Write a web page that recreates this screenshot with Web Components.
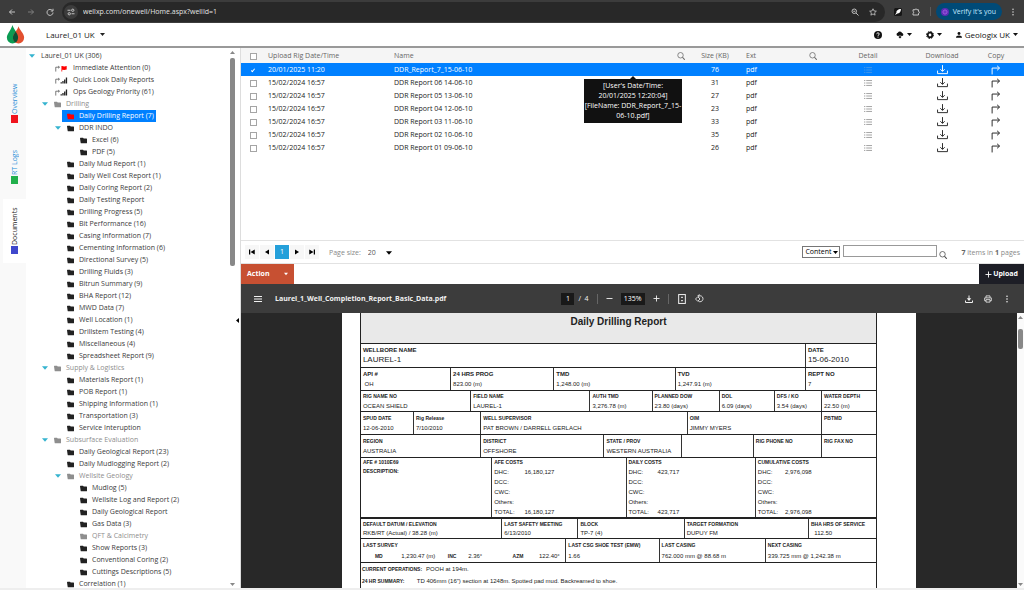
<!DOCTYPE html>
<html lang="en">
<head>
<meta charset="utf-8">
<title>Laurel_01 UK</title>
<style>
html, body {
  margin: 0;
  height: 100%;
}
body {
  overflow: hidden;
  font-family: "Open Sans", "Noto Sans", sans-serif;
  font-size: 7px;
  line-height: 12px;
  color: #222;
}
</style>
</head>
<body>
<well-app></well-app>

<script>
const icons = {
  back: ['0 0 16 16', '<path d="M14 8H3M8 3L3 8l5 5" fill="none" stroke="currentColor" stroke-width="1.8"/>'],
  forward: ['0 0 16 16', '<path d="M2 8h11M8 3l5 5-5 5" fill="none" stroke="currentColor" stroke-width="1.8"/>'],
  reload: ['0 0 16 16', '<path d="M13 5.5A6 6 0 1 0 14 9M14 1.5V6H9.5" fill="none" stroke="currentColor" stroke-width="1.8"/>'],
  tune: ['0 0 16 16', '<path d="M1 4.5h6M15 11.5H9" stroke="currentColor" stroke-width="1.8"/><circle cx="11.5" cy="4.5" r="2.3" fill="none" stroke="currentColor" stroke-width="1.8"/><circle cx="4.5" cy="11.5" r="2.3" fill="none" stroke="currentColor" stroke-width="1.8"/>'],
  zoomout: ['0 0 16 16', '<circle cx="6.5" cy="6.5" r="4.5" fill="none" stroke="currentColor" stroke-width="1.8"/><path d="M10 10l5 5M4.5 6.5h4" stroke="currentColor" stroke-width="1.8"/>'],
  star: ['0 0 16 16', '<path d="M8 1.5l2 4.4 4.7.5-3.5 3.2 1 4.7L8 11.9l-4.2 2.4 1-4.7L1.3 6.4 6 5.9z" fill="none" stroke="currentColor" stroke-width="1.5"/>'],
  feather: ['0 0 16 16', '<rect width="16" height="16" rx="3" fill="#161616"/><path d="M14 2C8 2 4 6 5 9l-3 5 5-3c3 0 7-3 7-9z" fill="#fff"/>'],
  puzzle: ['0 0 16 16', '<path d="M2 3.5h4.3a1.7 1.7 0 1 1 3.4 0H13V7a1.8 1.8 0 1 1 0 3.6V14H2v-3.5a1.8 1.8 0 0 0 0-3.5z" fill="none" stroke="currentColor" stroke-width="1.8"/>'],
  dots: ['0 0 16 16', '<circle cx="8" cy="2.5" r="1.6" fill="currentColor"/><circle cx="8" cy="8" r="1.6" fill="currentColor"/><circle cx="8" cy="13.5" r="1.6" fill="currentColor"/>'],
  avatar: ['0 0 16 16', '<circle cx="8" cy="8" r="8" fill="#5a2bb5"/><circle cx="8" cy="8" r="4" fill="none" stroke="#b06ae0" stroke-width="1.5"/><path d="M8 2v12M2 8h12" stroke="#8b48d8"/>'],
  drop: ['0 0 20 22', '<path d="M6.5 0C7.5 5 13 9 13 14.5a6.5 6.8 0 0 1-13 0C0 10 5 6 6.5 0z" fill="#0b9b53"/><path d="M13.5 1.5C14.5 6 20 9.5 20 14.5a6.5 6.8 0 0 1-13 0C7 10 12 7 13.5 1.5z" fill="#e2502f"/><path d="M10.2 7.5C11.8 9.7 13 12 13 14.5c0 2.5-1.2 4.8-3 5.9-1.8-1.1-3-3.4-3-5.9 0-2.5 1.7-4.7 3.2-7z" fill="#0a5136"/>'],
  caret: ['0 0 10 6', '<path d="M0 0h10L5 6z" fill="currentColor"/>'],
  caretup: ['0 0 10 6', '<path d="M0 6h10L5 0z" fill="currentColor"/>'],
  handle: ['0 0 6 10', '<path d="M6 0v10L0 5z" fill="currentColor"/>'],
  help: ['0 0 16 16', '<circle cx="8" cy="8" r="8" fill="currentColor"/><path d="M5.5 6.3C5.5 3 10.5 3 10.5 6c0 1.8-2.5 1.9-2.5 3.7" fill="none" stroke="#fff" stroke-width="1.9"/><circle cx="8" cy="12" r="1.2" fill="#fff"/>'],
  cloud: ['0 0 18 16', '<path d="M4.5 10.5a3.7 3.7 0 0 1-.3-7.3 5 5 0 0 1 9.4.5 3.5 3.5 0 0 1 .4 6.8h-2.5V8h-5v2.5z" fill="currentColor"/><path d="M7.5 8h3v4H13l-4 4-4-4h2.5z" fill="currentColor"/>'],
  gear: ['0 0 16 16', '<circle cx="8" cy="8" r="4.6" fill="none" stroke="currentColor" stroke-width="3.6"/><circle cx="8" cy="8" r="7" fill="none" stroke="currentColor" stroke-width="2" stroke-dasharray="3 2.5"/>'],
  user: ['0 0 16 16', '<circle cx="8" cy="4" r="3.8" fill="currentColor"/><path d="M0 15c0-4 3-6 8-6s8 2 8 6z" fill="currentColor"/>'],
  folder: ['0 0 14 12', '<path d="M0 1.5Q0 .5 1 .5h5L7.5 2H13q1 0 1 1v7.5q0 1-1 1H2.5q-1 0-1.2-1z" fill="currentColor"/>'],
  flag: ['0 0 28 16', '<path d="M2 15V5h8M7.5 2.5L10.5 5l-3 2.5" fill="none" stroke="#444" stroke-width="1.6"/><path d="M15 15V2h1.5l5 1.5L27 2v8.500l-5.500 1-4.700-.8V15z" fill="#f00"/>'],
  signal: ['0 0 28 16', '<path d="M2 15V5h8M7.5 2.5L10.5 5l-3 2.5" fill="none" stroke="#444" stroke-width="1.6"/><path d="M13 15v-3h3v3zm4 0V9h3v6zm4 0V5.5h3V15zm4 0V1h3v14z" fill="#222"/>'],
  search: ['0 0 16 16', '<circle cx="7" cy="6.5" r="5.5" fill="none" stroke="currentColor" stroke-width="1.5"/><path d="M11 10.5l4.5 5" stroke="currentColor" stroke-width="2.2"/>'],
  list: ['0 0 18 16', '<path d="M5 2.5h13M5 8h13M5 13.5h13M0 2.5h3M0 8h3M0 13.5h3" stroke="currentColor" stroke-width="1.5"/>'],
  download: ['0 0 20 18', '<path d="M1 11v5.5h18V11M10 1v11M6 8.5l4 4 4-4" fill="none" stroke="currentColor" stroke-width="1.7"/>'],
  copy: ['0 0 18 18', '<path d="M2 17V5.5h13M11 1.5l4.5 4-4.5 4" fill="none" stroke="currentColor" stroke-width="1.7"/>'],
  first: ['0 0 12 10', '<path d="M0 0h2.5v10H0zM11.5 0v10L3 5z" fill="currentColor"/>'],
  prev: ['0 0 12 10', '<path d="M10 0v10L2 5z" fill="currentColor"/>'],
  next: ['0 0 12 10', '<path d="M2 0v10l8-5z" fill="currentColor"/>'],
  last: ['0 0 12 10', '<path d="M9.5 0H12v10H9.5zM.5 0v10L9 5z" fill="currentColor"/>'],
  menu: ['0 0 16 12', '<path d="M0 1h16M0 6h16M0 11h16" stroke="currentColor" stroke-width="2"/>'],
  minus: ['0 0 14 14', '<path d="M1 7h12" stroke="currentColor" stroke-width="1.8"/>'],
  plus: ['0 0 14 14', '<path d="M1 7h12M7 1v12" stroke="currentColor" stroke-width="1.8"/>'],
  fit: ['0 0 16 18', '<rect x="2" y="1" width="12" height="16" fill="none" stroke="currentColor" stroke-width="1.8"/><path d="M6 7l2-3 2 3zM6 11l2 3 2-3z" fill="currentColor"/>'],
  rotate: ['0 0 18 18', '<path d="M6 3.5h4a6 6 0 1 1-3 11.2M9 .5l-3 3 3 3" fill="none" stroke="currentColor" stroke-width="1.7"/><path d="M5.5 5.5L10 10l-4.5 4.5L1 10z" fill="none" stroke="currentColor" stroke-width="1.7"/>'],
  save: ['0 0 16 16', '<path d="M1 11v4h14v-4M8 1v8" fill="none" stroke="currentColor" stroke-width="2"/><path d="M3.5 6.5h9L8 12z" fill="currentColor"/>'],
  print: ['0 0 18 16', '<path d="M4.5 5V1h9v4M4.5 12H1.5V5.5h15V12h-3" fill="none" stroke="currentColor" stroke-width="1.8"/><path d="M4.5 9.5h9V15h-9z" fill="none" stroke="currentColor" stroke-width="1.8"/>']
}

// attach a shadow root holding the given markup
const render = (el, html) => {
  el.attachShadow({mode: 'open'}).innerHTML = html
}

const buttonReset = /* CSS */`
button, a {
  font: inherit;
  color: inherit;
  text-decoration: none;
}
button {
  margin: 0;
  padding: 0;
  border: 0;
  background: none;
  display: inline-flex;
  align-items: center;
  justify-content: center;
}
`

class UiIcon extends HTMLElement {
  connectedCallback() {
    if(this.shadowRoot) return
    const [box, shape] = icons[this.getAttribute('name')]
    render(this, /* HTML */`
<style>
:host {
  display: inline-block;
  flex: none;
  width: var(--size, 8px);
  height: var(--size, 8px);
}
svg {
  display: block;
  width: 100%;
  height: 100%;
}
</style>
<svg viewBox="${box}" aria-hidden="true">${shape}</svg>
`)
  }
}
window.customElements.define('ui-icon', UiIcon)

class BrowserBar extends HTMLElement {
  constructor() {
    super()
    render(this, /* HTML */`
<style>
${buttonReset}
:host {
  display: flex;
  align-items: center;
  height: 23px;
  background: #3c3c3c;
  color: #d0d0d0;
}
nav {
  display: flex;
  gap: 11px;
  padding: 0 8px;
}
nav button:nth-child(2) {
  color: #858585;
}
.address {
  flex: 1;
  display: flex;
  align-items: center;
  gap: 5px;
  height: 20px;
  box-sizing: border-box;
  padding: 0 8px 0 2px;
  border-radius: 10px;
  background: #282828;
}
.site {
  width: 14px;
  height: 14px;
  border-radius: 7px;
  background: #3c3c3c;
}
input {
  flex: 1;
  min-width: 0;
  border: 0;
  padding: 0;
  background: none;
  color: #e3e3e3;
  font: inherit;
  outline: 0;
}
.tools {
  display: flex;
  align-items: center;
  gap: 10px;
  padding: 0 7px 0 9px;
}
.line {
  width: 1px;
  height: 9px;
  background: #5a5a5a;
}
.verify {
  gap: 4px;
  height: 17px;
  margin: 0 -3px 0 -5px;
  padding: 0 6px 0 5px;
  border-radius: 9px;
  background: #004a77;
  color: #c2e7ff;
}
</style>
<nav>
  <button aria-label="Back"><ui-icon name="back"></ui-icon></button>
  <button aria-label="Forward"><ui-icon name="forward"></ui-icon></button>
  <button aria-label="Reload"><ui-icon name="reload"></ui-icon></button>
</nav>
<div class="address">
  <button class="site" aria-label="Site information"><ui-icon name="tune"></ui-icon></button>
  <input aria-label="Address" value="wellxp.com/onewell/Home.aspx?wellId=1">
  <button aria-label="Zoom"><ui-icon name="zoomout"></ui-icon></button>
  <span></span>
  <button aria-label="Bookmark"><ui-icon name="star"></ui-icon></button>
</div>
<div class="tools">
  <button aria-label="Feather"><ui-icon name="feather"></ui-icon></button>
  <button aria-label="Extensions"><ui-icon name="puzzle"></ui-icon></button>
  <span class="line"></span>
  <button class="verify"><ui-icon name="avatar"></ui-icon>Verify it's you</button>
  <button aria-label="Menu"><ui-icon name="dots"></ui-icon></button>
</div>
`)
  }
}
window.customElements.define('browser-bar', BrowserBar)

class AppHeader extends HTMLElement {
  constructor() {
    super()
    render(this, /* HTML */`
<style>
${buttonReset}
:host {
  display: flex;
  align-items: center;
  height: 23px;
  padding: 0 6px;
  border-bottom: 2px solid #999;
  background: #fff;
  font-size: 8px;
}
.logo {
  --size: 19px;
  margin-right: 21px;
}
.well {
  flex: 1;
}
nav {
  display: flex;
  gap: 14px;
}
button {
  gap: 5px;
}
nav button {
  gap: 3px;
  color: #111;
}
.caret {
  --size: 5px;
}
</style>
<ui-icon class="logo" name="drop"></ui-icon>
<div class="well"><button>Laurel_01 UK <ui-icon class="caret" name="caret"></ui-icon></button></div>
<nav>
  <button aria-label="Help"><ui-icon name="help"></ui-icon></button>
  <button aria-label="Downloads"><ui-icon name="cloud"></ui-icon> <ui-icon class="caret" name="caret"></ui-icon></button>
  <button aria-label="Settings"><ui-icon name="gear"></ui-icon> <ui-icon class="caret" name="caret"></ui-icon></button>
  <button><ui-icon name="user" style="--size: 6px"></ui-icon> Geologix UK <ui-icon class="caret" name="caret"></ui-icon></button>
</nav>
`)
  }
}
window.customElements.define('app-header', AppHeader)

class SideTab extends HTMLElement {
  constructor() {
    super()
    render(this, /* HTML */`
<style>
${buttonReset}
:host {
  display: flex;
  margin-left: 3px;
  color: #2a8fd8;
}
:host([selected]) {
  background: #fff;
  color: #222;
}
button {
  flex: 1;
  height: 64px;
  writing-mode: vertical-rl;
  transform: rotate(180deg);
  gap: 1px;
}
i {
  width: 7px;
  height: 8px;
  background: var(--mark);
}
</style>
<button role="tab"><i></i><slot></slot></button>
`)
  }
}
window.customElements.define('side-tab', SideTab)

class SideTabs extends HTMLElement {
  constructor() {
    super()
    render(this, /* HTML */`
<style>
:host {
  display: flex;
  flex-direction: column;
  width: 26px;
  flex: none;
  box-sizing: border-box;
  padding-top: 23px;
  background: #f9f9f9;
}
</style>
<side-tab style="--mark: #f0141e">Overview</side-tab>
<side-tab style="--mark: #22b04c">RT Logs</side-tab>
<side-tab style="--mark: #3f48cc" selected>Documents</side-tab>
`)
  }
}
window.customElements.define('side-tabs', SideTabs)

class ScrollRail extends HTMLElement {
  constructor() {
    super()
    render(this, /* HTML */`
<style>
:host {
  display: flex;
  flex-direction: column;
  align-items: center;
  flex: none;
  width: 7px;
  box-sizing: border-box;
  padding: 2px 0 1px;
  color: #888;
}
ui-icon {
  --size: 5px;
}
div {
  flex: 1;
  width: 5px;
  padding: 3px 0;
}
i {
  display: block;
  height: var(--thumb);
  margin-top: var(--start, 0px);
  border-radius: 2px;
  background: #888;
}
</style>
<ui-icon name="caretup"></ui-icon>
<div><i></i></div>
<ui-icon name="caret"></ui-icon>
`)
  }
}
window.customElements.define('scroll-rail', ScrollRail)

class TreeItem extends HTMLElement {
  connectedCallback() {
    if(this.shadowRoot) return
    const icon = this.getAttribute('icon')
    render(this, /* HTML */`
<style>
${buttonReset}
:host {
  display: block;
  color: #3a3a3a;
}
.row {
  display: flex;
  height: 12px;
}
.row button, .row span {
  width: 8px;
  --size: 6px;
  color: #35b3cf;
}
a {
  display: flex;
  align-items: center;
  gap: 5px;
  padding: 0 5px;
  white-space: nowrap;
}
:host([selected]) > .row a {
  padding-right: 2px;
}
a ui-icon {
  --size: 7px;
  color: #222;
}
a ui-icon.wide {
  width: 14px;
}
.group {
  margin-left: 13px;
}
:host([muted]) > .row a, :host([muted]) > .row a ui-icon {
  color: #8e8e8e;
}
:host([selected]) > .row a {
  background: #0080ff;
  color: #fff;
}
:host([selected]) > .row a ui-icon {
  color: #f00;
}
</style>
<div class="row">
  ${this.hasAttribute('open') ? '<button aria-label="Collapse"><ui-icon name="caret"></ui-icon></button>' : '<span></span>'}
  <a href="#">${icon === 'none' ? '' : `<ui-icon name="${icon || 'folder'}" class="${icon ? 'wide' : ''}"></ui-icon>`}${this.getAttribute('label').replace('&', '&amp;')}</a>
</div>
<div class="group"><slot></slot></div>
`)
  }
}
window.customElements.define('tree-item', TreeItem)

class DocumentTree extends HTMLElement {
  constructor() {
    super()
    render(this, /* HTML */`
<style>
:host {
  position: relative;
  display: flex;
  flex: none;
  width: 215px;
  box-sizing: border-box;
  border-right: 1px solid #ddd;
  background: #fff;
}
.items {
  flex: 1;
  padding: 2px 0 0 2px;
  overflow: hidden;
}
scroll-rail {
  --thumb: 40%;
  margin-right: 4px;
}
.handle {
  position: absolute;
  right: 0;
  top: 50%;
  --size: 5px;
  color: #000;
}
</style>
<div class="items">
  <tree-item label="Laurel_01 UK (306)" icon="none" open>
    <tree-item label="Immediate Attention (0)" icon="flag"></tree-item>
    <tree-item label="Quick Look Daily Reports" icon="signal"></tree-item>
    <tree-item label="Ops Geology Priority (61)" icon="signal"></tree-item>
    <tree-item label="Drilling" open muted>
      <tree-item label="Daily Drilling Report (7)" selected></tree-item>
      <tree-item label="DDR INDO" open>
        <tree-item label="Excel (6)"></tree-item>
        <tree-item label="PDF (5)"></tree-item>
      </tree-item>
      <tree-item label="Daily Mud Report (1)"></tree-item>
      <tree-item label="Daily Well Cost Report (1)"></tree-item>
      <tree-item label="Daily Coring Report (2)"></tree-item>
      <tree-item label="Daily Testing Report"></tree-item>
      <tree-item label="Drilling Progress (5)"></tree-item>
      <tree-item label="Bit Performance (16)"></tree-item>
      <tree-item label="Casing Information (7)"></tree-item>
      <tree-item label="Cementing Information (6)"></tree-item>
      <tree-item label="Directional Survey (5)"></tree-item>
      <tree-item label="Drilling Fluids (3)"></tree-item>
      <tree-item label="Bitrun Summary (9)"></tree-item>
      <tree-item label="BHA Report (12)"></tree-item>
      <tree-item label="MWD Data (7)"></tree-item>
      <tree-item label="Well Location (1)"></tree-item>
      <tree-item label="Drillstem Testing (4)"></tree-item>
      <tree-item label="Miscellaneous (4)"></tree-item>
      <tree-item label="Spreadsheet Report (9)"></tree-item>
    </tree-item>
    <tree-item label="Supply & Logistics" open muted>
      <tree-item label="Materials Report (1)"></tree-item>
      <tree-item label="POB Report (1)"></tree-item>
      <tree-item label="Shipping Information (1)"></tree-item>
      <tree-item label="Transportation (3)"></tree-item>
      <tree-item label="Service Interuption"></tree-item>
    </tree-item>
    <tree-item label="Subsurface Evaluation" open muted>
      <tree-item label="Daily Geological Report (23)"></tree-item>
      <tree-item label="Daily Mudlogging Report (2)"></tree-item>
      <tree-item label="Wellsite Geology" open muted>
        <tree-item label="Mudlog (5)"></tree-item>
        <tree-item label="Wellsite Log and Report (2)"></tree-item>
        <tree-item label="Daily Geological Report"></tree-item>
        <tree-item label="Gas Data (3)"></tree-item>
        <tree-item label="QFT & Calcimetry" muted></tree-item>
        <tree-item label="Show Reports (3)"></tree-item>
        <tree-item label="Conventional Coring (2)"></tree-item>
        <tree-item label="Cuttings Descriptions (5)"></tree-item>
      </tree-item>
      <tree-item label="Correlation (1)"></tree-item>
    </tree-item>
  </tree-item>
</div>
<scroll-rail></scroll-rail>
<ui-icon class="handle" name="handle"></ui-icon>
`)
  }
}
window.customElements.define('document-tree', DocumentTree)

const files = [
  ['20/01/2025 11:20', 'DDR_Report_7_15-06-10', 76],
  ['15/02/2024 16:57', 'DDR Report 06 14-06-10', 31],
  ['15/02/2024 16:57', 'DDR Report 05 13-06-10', 27],
  ['15/02/2024 16:57', 'DDR Report 04 12-06-10', 23],
  ['15/02/2024 16:57', 'DDR Report 03 11-06-10', 33],
  ['15/02/2024 16:57', 'DDR Report 02 10-06-10', 35],
  ['15/02/2024 16:57', 'DDR Report 01 09-06-10', 26]
]

class ToolTip extends HTMLElement {
  constructor() {
    super()
    render(this, /* HTML */`
<style>
:host {
  position: absolute;
  z-index: 1;
  top: calc(100% + 3px);
  right: 8px;
  width: 98px;
  box-sizing: border-box;
  padding: 2px 0;
  background: #111;
  color: #fff;
  line-height: 10px;
  text-align: center;
  white-space: nowrap;
}
:host::before {
  content: "";
  position: absolute;
  left: calc(50% - 3px);
  top: -3px;
  border: 3px solid transparent;
  border-top: 0;
  border-bottom-color: #111;
}
</style>
<slot></slot>
`)
  }
}
window.customElements.define('tool-tip', ToolTip)

class FileGrid extends HTMLElement {
  constructor() {
    super()
    const rows = files.map(([date, name, size], i) => /* HTML */`
  <tr class="${i ? '' : 'selected'}">
    <td class="mid"><input type="checkbox" aria-label="Select ${name}" ${i ? '' : 'checked'}></td>
    <td>${date}</td>
    <td class="name">${name}${i ? '' : `<tool-tip>[User's Date/Time:<br>20/01/2025 12:20:04]<br>[FileName: DDR_Report_7_15-<br>06-10.pdf]</tool-tip>`}</td>
    <td class="mid">${size}</td>
    <td class="ext">pdf</td>
    <td class="mid detail"><button aria-label="Detail"><ui-icon name="list"></ui-icon></button></td>
    <td class="mid"><button aria-label="Download"><ui-icon name="download" style="--size: 11px"></ui-icon></button></td>
    <td class="mid"><button aria-label="Copy"><ui-icon name="copy" style="--size: 10px"></ui-icon></button></td>
  </tr>`).join('')
    render(this, /* HTML */`
<style>
${buttonReset}
:host {
  display: block;
  flex: none;
  height: 192px;
  background: #fff;
}
table {
  width: 100%;
  table-layout: fixed;
  border-collapse: collapse;
}
th, td {
  height: 13px;
  padding: 0 3px;
  font-weight: normal;
  text-align: left;
  line-height: 11px;
}
th {
  height: 15px;
  background: #f5f5f5;
  color: #666;
}
th > div {
  display: flex;
  align-items: center;
  justify-content: space-between;
  padding-right: 2px;
}
th.ext, td.ext {
  padding-left: 6px;
}
th.mid, td.mid {
  padding: 0;
  text-align: center;
}
td button, input {
  vertical-align: middle;
}
.name {
  position: relative;
}
.detail {
  color: #777;
}
.selected {
  background: #0080ff;
  color: #fff;
}
.selected .detail {
  color: #5b9fe0;
}
input {
  appearance: none;
  width: 7px;
  height: 7px;
  margin: 0;
  border: 1px solid #a5a5a5;
  background: #fff;
}
input:checked {
  position: relative;
  border-color: transparent;
  background: none;
}
input:checked::after {
  content: "";
  position: absolute;
  left: 1px;
  top: 0;
  width: 1px;
  height: 3px;
  border: solid #fff;
  border-width: 0 1px 1px 0;
  transform: rotate(40deg);
}
</style>
<table>
  <colgroup>
    <col style="width: 24px"><col style="width: 126px"><col><col style="width: 50px">
    <col style="width: 80px"><col style="width: 96px"><col style="width: 52px"><col style="width: 56px">
  </colgroup>
  <tr>
    <th class="mid"><input type="checkbox" aria-label="Select all"></th>
    <th>Upload Rig Date/Time</th>
    <th><div>Name <ui-icon name="search"></ui-icon></div></th>
    <th class="mid">Size (KB)</th>
    <th class="ext"><div style="padding: 0">Ext <ui-icon name="search"></ui-icon></div></th>
    <th class="mid">Detail</th>
    <th class="mid">Download</th>
    <th class="mid">Copy</th>
  </tr>${rows}
</table>
`)
  }
}
window.customElements.define('file-grid', FileGrid)

class GridPager extends HTMLElement {
  constructor() {
    super()
    render(this, /* HTML */`
<style>
${buttonReset}
:host {
  display: flex;
  align-items: center;
  flex: none;
  height: 22px;
  padding: 0 4px;
  border: solid #e2e2e2;
  border-width: 1px 0;
  background: #fff;
  color: #888;
}
.pages {
  display: flex;
  gap: 1px;
}
.pages button {
  width: 14px;
  height: 14px;
  background: #f7f7f7;
  color: #000;
  --size: 6px;
}
.pages .current {
  background: #25a0da;
  color: #fff;
}
label {
  display: flex;
  align-items: center;
  margin: 2px auto 0 10px;
  gap: 4px;
}
.size {
  appearance: none;
  width: 17px;
  padding: 0 0 0 3px;
  border: 0;
  background: none;
  color: #555;
  font: inherit;
}
label ui-icon {
  --size: 6px;
  color: #000;
}
.picker {
  position: relative;
  display: flex;
  align-items: center;
}
.picker select {
  appearance: none;
  width: 38px;
  height: 12px;
  box-sizing: border-box;
  padding: 0 0 0 2px;
  border: 1px solid #767676;
  border-radius: 0;
  background: #fff;
  color: #000;
  font: inherit;
  line-height: 10px;
}
.picker ui-icon {
  position: absolute;
  right: 2px;
  --size: 5px;
  color: #000;
}
.query {
  width: 94px;
  height: 12px;
  box-sizing: border-box;
  margin: 0 2px 2px 3px;
  border: 1px solid #999;
  font: inherit;
}
.find {
  margin: 6px 14px 0 0;
  color: #444;
}
.total {
  padding-top: 2px;
}
b {
  color: #666;
}
</style>
<div class="pages">
  <button aria-label="First page"><ui-icon name="first"></ui-icon></button>
  <button aria-label="Previous page"><ui-icon name="prev"></ui-icon></button>
  <button class="current">1</button>
  <button aria-label="Next page"><ui-icon name="next"></ui-icon></button>
  <button aria-label="Last page"><ui-icon name="last"></ui-icon></button>
</div>
<label>Page size: <select class="size"><option>20</option></select><ui-icon name="caret"></ui-icon></label>
<div class="picker">
  <select aria-label="Search in"><option>Content</option></select>
  <ui-icon name="caret"></ui-icon>
</div>
<input class="query" aria-label="Search">
<button class="find" aria-label="Find"><ui-icon name="search"></ui-icon></button>
<span class="total"><b>7</b> items in <b>1</b> pages</span>
`)
  }
}
window.customElements.define('grid-pager', GridPager)

class ActionBar extends HTMLElement {
  constructor() {
    super()
    render(this, /* HTML */`
<style>
${buttonReset}
:host {
  display: flex;
  justify-content: space-between;
  flex: none;
  height: 20px;
  background: #fff;
  color: #fff;
  font-weight: bold;
}
.action {
  gap: 14px;
  padding: 0 6px;
  background: #c75032;
}
.action ui-icon {
  --size: 4px;
}
.upload {
  gap: 1px;
  padding: 0 6px;
  background: #1d1e26;
}
</style>
<button class="action">Action <ui-icon name="caret"></ui-icon></button>
<button class="upload"><ui-icon name="plus" style="--size: 7px"></ui-icon>Upload</button>
`)
  }
}
window.customElements.define('action-bar', ActionBar)

class ReportRow extends HTMLElement {
  constructor() {
    super()
    render(this, /* HTML */`
<style>
:host {
  display: grid;
  grid-template-columns: var(--cols, 1fr);
  box-sizing: border-box;
  border-top: 1px solid #222;
}
:host([strong]) {
  border-top-width: 2px;
}
</style>
<slot></slot>
`)
  }
}
window.customElements.define('report-row', ReportRow)

class ReportCell extends HTMLElement {
  connectedCallback() {
    if(this.shadowRoot) return
    render(this, /* HTML */`
<style>
:host {
  display: flex;
  flex-direction: column;
  justify-content: space-evenly;
  min-width: 0;
  padding-left: 2px;
  border-left: 1px solid #333;
  white-space: nowrap;
}
:host(:first-child) {
  border-left: 0;
}
:host([top]) {
  justify-content: flex-start;
  gap: 1px;
}
b {
  min-height: 8px;
  font-size: var(--label, 5px);
}
</style>
<b>${this.getAttribute('label') || ''}</b>
<span><slot></slot></span>
`)
  }
}
window.customElements.define('report-cell', ReportCell)

class CostList extends HTMLElement {
  connectedCallback() {
    if(this.shadowRoot) return
    const cost = this.getAttribute('cost')
    render(this, /* HTML */`
<style>
:host {
  display: grid;
  grid-template-columns: 23% 1fr;
  line-height: 10px;
}
</style>
<span>DHC:</span><span>${cost}</span>
<span>DCC:</span><span></span>
<span>CWC:</span><span></span>
<span>Others:</span><span></span>
<span>TOTAL:</span><span>${cost}</span>
`)
  }
}
window.customElements.define('cost-list', CostList)

class DrillingReport extends HTMLElement {
  constructor() {
    super()
    render(this, /* HTML */`
<style>
:host {
  display: flex;
  flex-direction: column;
  width: 74%;
  box-sizing: border-box;
  padding: 0 39px 0 18px;
  background: #fff;
  color: #222;
  font: 6px/8px "Liberation Sans", Arial, sans-serif;
}
.form {
  flex: 1;
  border: solid #222;
  border-width: 0 1px;
}
h1 {
  height: 30px;
  box-sizing: border-box;
  margin: 0;
  padding-top: 2px;
  background: #e9e9e9;
  font-size: 10px;
  line-height: 14px;
  text-align: center;
}
.h20 { height: 21px; }
.h22 { height: 23px; }
.h24 { height: 24px; }
.h60 { height: 60px; }
.mid { --label: 6px; }
.big { font-size: 8px; line-height: 10px; }
.survey {
  display: grid;
  grid-template-columns: 19% 17% 16% 16% 19% 1fr;
}
.survey b, p b {
  font-size: 5px;
}
.survey b {
  padding-left: 12px;
}
p {
  margin: 2px 0 4px 1px;
}
p b {
  margin-right: 4px;
}
</style>
<div class="form">
  <h1>Daily Drilling Report</h1>
  <report-row class="h24 mid" style="--cols: 443fr 71fr">
    <report-cell label="WELLBORE NAME"><span class="big">LAUREL-1</span></report-cell>
    <report-cell label="DATE"><span class="big">15-06-2010</span></report-cell>
  </report-row>
  <report-row class="h22 mid" style="--cols: 89fr 103fr 121fr 130fr 71fr">
    <report-cell label="API #">&nbsp;OH</report-cell>
    <report-cell label="24 HRS PROG">823.00 (m)</report-cell>
    <report-cell label="TMD">1,248.00 (m)</report-cell>
    <report-cell label="TVD">1,247.91 (m)</report-cell>
    <report-cell label="REPT NO">7</report-cell>
  </report-row>
  <report-row class="h20" style="--cols: 109fr 119fr 62fr 67fr 55fr 47fr 55fr">
    <report-cell label="RIG NAME NO">OCEAN SHIELD</report-cell>
    <report-cell label="FIELD NAME">LAUREL-1</report-cell>
    <report-cell label="AUTH TMD">3,276.78 (m)</report-cell>
    <report-cell label="PLANNED DOW">23.80 (days)</report-cell>
    <report-cell label="DOL">6.09 (days)</report-cell>
    <report-cell label="DFS / KO">3.54 (days)</report-cell>
    <report-cell label="WATER DEPTH">22.50 (m)</report-cell>
  </report-row>
  <report-row class="h22" style="--cols: 52fr 67fr 206fr 134fr 55fr">
    <report-cell label="SPUD DATE">12-06-2010</report-cell>
    <report-cell label="Rig Release">7/10/2010</report-cell>
    <report-cell label="WELL SUPERVISOR">PAT BROWN / DARRELL GERLACH</report-cell>
    <report-cell label="OIM">JIMMY MYERS</report-cell>
    <report-cell label="PBTMD">&nbsp;</report-cell>
  </report-row>
  <report-row class="h22" style="--cols: 119fr 123fr 77fr 72fr 68fr 55fr">
    <report-cell label="REGION">AUSTRALIA</report-cell>
    <report-cell label="DISTRICT">OFFSHORE</report-cell>
    <report-cell label="STATE / PROV">WESTERN AUSTRALIA</report-cell>
    <report-cell></report-cell>
    <report-cell label="RIG PHONE NO">&nbsp;</report-cell>
    <report-cell label="RIG FAX NO">&nbsp;</report-cell>
  </report-row>
  <report-row class="h60" style="--cols: 130fr 134fr 129fr 121fr">
    <report-cell label="AFE # 1010E69" top><b style="font-size: 5px">DESCRIPTION:</b></report-cell>
    <report-cell label="AFE COSTS" top><cost-list cost="16,180,127"></cost-list></report-cell>
    <report-cell label="DAILY COSTS" top><cost-list cost="423,717"></cost-list></report-cell>
    <report-cell label="CUMULATIVE COSTS" top><cost-list cost="2,976,098"></cost-list></report-cell>
  </report-row>
  <report-row class="h20" style="--cols: 140fr 76fr 106fr 124fr 68fr" strong>
    <report-cell label="DEFAULT DATUM / ELEVATION">RKB/RT (Actual) / 38.28 (m)</report-cell>
    <report-cell label="LAST SAFETY MEETING">6/13/2010</report-cell>
    <report-cell label="BLOCK">TP-7 (4)</report-cell>
    <report-cell label="TARGET FORMATION">DUPUY FM</report-cell>
    <report-cell label="BHA HRS OF SERVICE">&nbsp; 112.50</report-cell>
  </report-row>
  <report-row class="h24" style="--cols: 204fr 93fr 106fr 111fr">
    <report-cell label="LAST SURVEY"><div class="survey"><b>MD</b><span>1,230.47 (m)</span><b>INC</b><span>2.36°</span><b>AZM</b><span>122.40°</span></div></report-cell>
    <report-cell label="LAST CSG SHOE TEST (EMW)">1.66</report-cell>
    <report-cell label="LAST CASING">762.000 mm @ 88.68 m</report-cell>
    <report-cell label="NEXT CASING">339.725 mm @ 1,242.38 m</report-cell>
  </report-row>
  <report-row>
    <div>
      <p><b>CURRENT OPERATIONS:</b>POOH at 194m.</p>
      <p><b>24 HR SUMMARY:</b>&nbsp; &nbsp; &nbsp;TD 406mm (16") section at 1248m. Spotted pad mud. Backreamed to shoe.</p>
    </div>
  </report-row>
</div>
`)
  }
}
window.customElements.define('drilling-report', DrillingReport)

class PdfViewer extends HTMLElement {
  constructor() {
    super()
    render(this, /* HTML */`
<style>
${buttonReset}
:host {
  display: flex;
  flex-direction: column;
  flex: 1;
  min-height: 0;
  background: #282828;
}
header {
  display: flex;
  align-items: center;
  flex: none;
  height: 29px;
  padding: 0 13px;
  background: #3c3c3c;
  color: #f1f1f1;
}
.left, .right {
  flex: 1;
  display: flex;
  align-items: center;
  gap: 13px;
}
.right {
  justify-content: flex-end;
  gap: 11px;
}
.center {
  display: flex;
  align-items: center;
  gap: 8px;
}
.center > span {
  display: flex;
  align-items: center;
  gap: 4px;
}
input {
  width: 13px;
  height: 12px;
  box-sizing: border-box;
  padding: 0;
  border: 0;
  background: #191919;
  color: #fff;
  font: inherit;
  text-align: center;
}
input.zoom {
  width: 24px;
}
.line {
  width: 1px;
  height: 10px;
  background: #666;
}
.stage {
  flex: 1;
  min-height: 0;
  display: flex;
}
.canvas {
  flex: 1;
  display: flex;
  justify-content: center;
  overflow: hidden;
}
scroll-rail {
  --thumb: 8%;
  --start: 6px;
  background: #fafafa;
}
</style>
<header>
  <div class="left">
    <button aria-label="Sidebar"><ui-icon name="menu"></ui-icon></button>
    <b>Laurel_1_Well_Completion_Report_Basic_Data.pdf</b>
  </div>
  <div class="center">
    <span><input aria-label="Page" value="1"> / &nbsp;4</span>
    <span class="line"></span>
    <button aria-label="Zoom out"><ui-icon name="minus" style="--size: 7px"></ui-icon></button>
    <input class="zoom" aria-label="Zoom level" value="135%">
    <button aria-label="Zoom in"><ui-icon name="plus" style="--size: 7px"></ui-icon></button>
    <span class="line"></span>
    <button aria-label="Fit to page"><ui-icon name="fit" style="--size: 10px"></ui-icon></button>
    <button aria-label="Rotate"><ui-icon name="rotate" style="--size: 9px"></ui-icon></button>
  </div>
  <div class="right">
    <button aria-label="Download"><ui-icon name="save"></ui-icon></button>
    <button aria-label="Print"><ui-icon name="print"></ui-icon></button>
    <button aria-label="More"><ui-icon name="dots"></ui-icon></button>
  </div>
</header>
<div class="stage">
  <div class="canvas"><drilling-report></drilling-report></div>
  <scroll-rail></scroll-rail>
</div>
`)
  }
}
window.customElements.define('pdf-viewer', PdfViewer)

class WellApp extends HTMLElement {
  constructor() {
    super()
    render(this, /* HTML */`
<style>
:host {
  display: flex;
  flex-direction: column;
  height: 100vh;
  box-sizing: border-box;
  border-bottom: 2px solid #eee;
}
browser-bar, app-header {
  flex: none;
}
main {
  flex: 1;
  min-height: 0;
  display: flex;
}
section {
  flex: 1;
  min-width: 0;
  display: flex;
  flex-direction: column;
}
</style>
<browser-bar></browser-bar>
<app-header></app-header>
<main>
  <side-tabs></side-tabs>
  <document-tree></document-tree>
  <section>
    <file-grid></file-grid>
    <grid-pager></grid-pager>
    <action-bar></action-bar>
    <pdf-viewer></pdf-viewer>
  </section>
</main>
`)
  }
}
window.customElements.define('well-app', WellApp)
</script>
</body>
</html>
